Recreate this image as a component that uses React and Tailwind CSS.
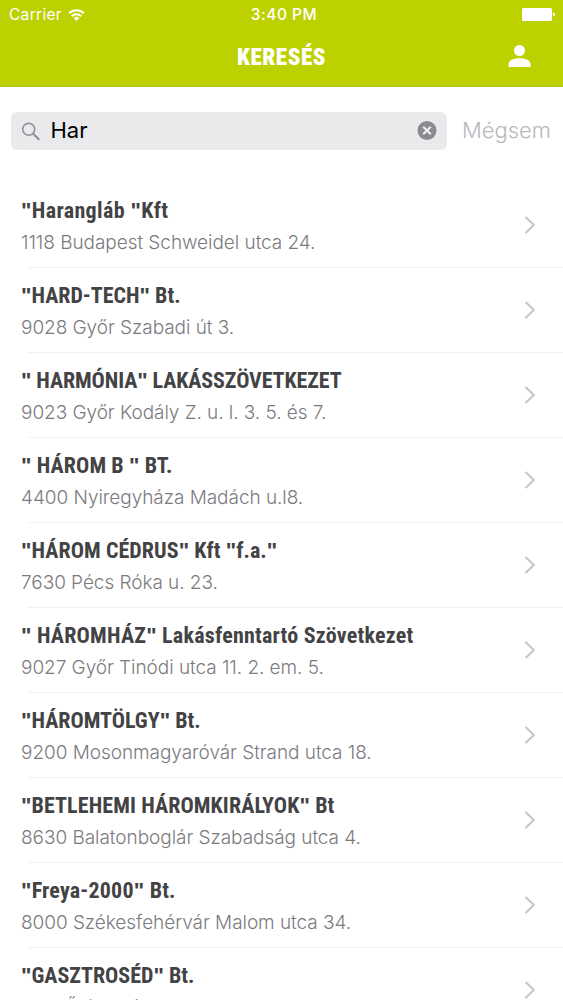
const results = [
  { name: '"Harangláb "Kft', address: '1118 Budapest Schweidel utca 24.', tracking: 'tracking-[0.36px]' },
  { name: '"HARD-TECH" Bt.', address: '9028 Győr Szabadi út 3.', tracking: 'tracking-[0px]' },
  { name: '" HARMÓNIA" LAKÁSSZÖVETKEZET', address: '9023 Győr Kodály Z. u. l. 3. 5. és 7.', tracking: 'tracking-[-0.1px]' },
  { name: '" HÁROM B " BT.', address: '4400 Nyiregyháza Madách u.l8.', tracking: 'tracking-[0.1px]' },
  { name: '"HÁROM CÉDRUS" Kft "f.a."', address: '7630 Pécs Róka u. 23.', tracking: 'tracking-[0.06px]' },
  { name: '" HÁROMHÁZ" Lakásfenntartó Szövetkezet', address: '9027 Győr Tinódi utca 11. 2. em. 5.', tracking: 'tracking-[0.22px]' },
  { name: '"HÁROMTÖLGY" Bt.', address: '9200 Mosonmagyaróvár Strand utca 18.', tracking: 'tracking-[0px]' },
  { name: '"BETLEHEMI HÁROMKIRÁLYOK" Bt', address: '8630 Balatonboglár Szabadság utca 4.', tracking: 'tracking-[0.1px]' },
  { name: '"Freya-2000" Bt.', address: '8000 Székesfehérvár Malom utca 34.', tracking: 'tracking-[0.2px]' },
  { name: '"GASZTROSÉD" Bt.', address: '8161 Ősi Vasút u. 2.', tracking: 'tracking-[0px]' },
];

function StatusBar() {
  return (
    <div className="grid h-[29px] grid-cols-3 items-center pr-2 pl-[9px]">
      <div className="flex items-center gap-[6px]">
        <span className="text-[15.5px] tracking-[0.3px]">Carrier</span>
        <svg className="h-3 w-[17px]" viewBox="0 0 17 12" fill="none" stroke="currentColor" strokeWidth="2.1">
          <path d="M1 4.3a10.6 10.6 0 0 1 15 0" />
          <path d="M3.8 7.2a6.7 6.7 0 0 1 9.4 0" />
          <path d="M8.5 12 5.7 9.2a4 4 0 0 1 5.6 0Z" fill="currentColor" stroke="none" />
        </svg>
      </div>
      <span className="pl-1 text-center text-[15.5px] font-medium tracking-[0.5px]">3:40 PM</span>
      <svg className="h-[13px] w-[33px] justify-self-end" viewBox="0 0 33 13" fill="currentColor">
        <rect width="30" height="13" rx="1.5" />
        <path d="M31 4.5c1.2.2 2 1 2 2s-.8 1.800-2 2Z" />
      </svg>
    </div>
  );
}

/* The condensed face has very narrow straight quotes, so they are set in a wider one. */
function Name({ text }) {
  return text.split(/(")/).map((part, index) =>
    part === '"' ? (
      <span key={index} className="font-['Liberation_Sans',sans-serif]">
        {part}
      </span>
    ) : (
      part
    ),
  );
}

function Result({ name, address, tracking }) {
  return (
    <li className="flex h-[85px] shrink-0 flex-col pl-[21px]">
      <div className="flex flex-1 items-center justify-between pr-[27px]">
        <div className="pt-[3px] whitespace-nowrap">
          <h2 className={`font-['Roboto_Condensed',Roboto,sans-serif] text-[22px] leading-7 font-bold text-[#434345] ${tracking}`}>
            <Name text={name} />
          </h2>
          <p className="mt-1 text-[19px] leading-7 font-light tracking-[-0.05px] text-[#7b7b7f]">{address}</p>
        </div>
        <svg className="h-[18px] w-3" viewBox="0 0 12 18" fill="none" stroke="#c7c7cc" strokeWidth="2.2">
          <path d="m1.500 1 8.300 8-8.300 8" />
        </svg>
      </div>
      <div className="ml-[7px] h-px bg-[#f2f2f3]" />
    </li>
  );
}

export default function App() {
  return (
    <div className="flex h-[1000px] flex-col overflow-hidden bg-white font-[Inter,sans-serif]">
      <header className="flex h-[87px] shrink-0 flex-col border-b border-[#b5c51b] bg-[#bed100] text-white">
        <StatusBar />
        <div className="grid flex-1 grid-cols-[1fr_auto_1fr] items-center pb-[3px]">
          <h1 className="col-start-2 pt-[3px] font-['Roboto_Condensed',Roboto,sans-serif] text-[23px] leading-none font-black tracking-[0.6px]">KERESÉS</h1>
          <svg className="mr-8 h-[22px] w-[23px] justify-self-end" viewBox="0 0 23 22" fill="currentColor">
            <circle cx="11.500" cy="5.500" r="5.500" />
            <path d="M.5 22v-2.500C.5 15.500 5 13.300 11.500 13.300s11 2.200 11 6.200V22Z" />
          </svg>
        </div>
      </header>
      <div className="flex shrink-0 items-center gap-[15px] pt-[25px] pr-3 pb-[33px] pl-[11px]">
        <label className="flex h-[38px] flex-1 items-center rounded-md bg-[#e9eaeb] px-[10px] text-[22px] text-black">
          <svg className="h-[19px] w-[19px]" viewBox="0 0 19 19" fill="none" stroke="#8e8e93" strokeWidth="1.500">
            <circle cx="7.700" cy="7.200" r="6" />
            <path d="m12.200 11.800 6 6" strokeWidth="2" />
          </svg>
          <span className="ml-[10.5px] flex-1 pb-[2px]">Har</span>
          <svg className="h-5 w-5" viewBox="0 0 20 20" fill="none">
            <circle cx="10" cy="9.500" r="9.500" fill="#8b8b8f" />
            <path d="m6.200 5.700 7.600 7.600m0-7.600-7.600 7.600" stroke="#f0f0f1" strokeWidth="2.100" />
          </svg>
        </label>
        <button className="pb-[2px] text-[22px] font-light text-[#b8b8bc]">Mégsem</button>
      </div>
      <ul>
        {results.map((result) => (
          <Result key={result.name} {...result} />
        ))}
      </ul>
    </div>
  );
}
